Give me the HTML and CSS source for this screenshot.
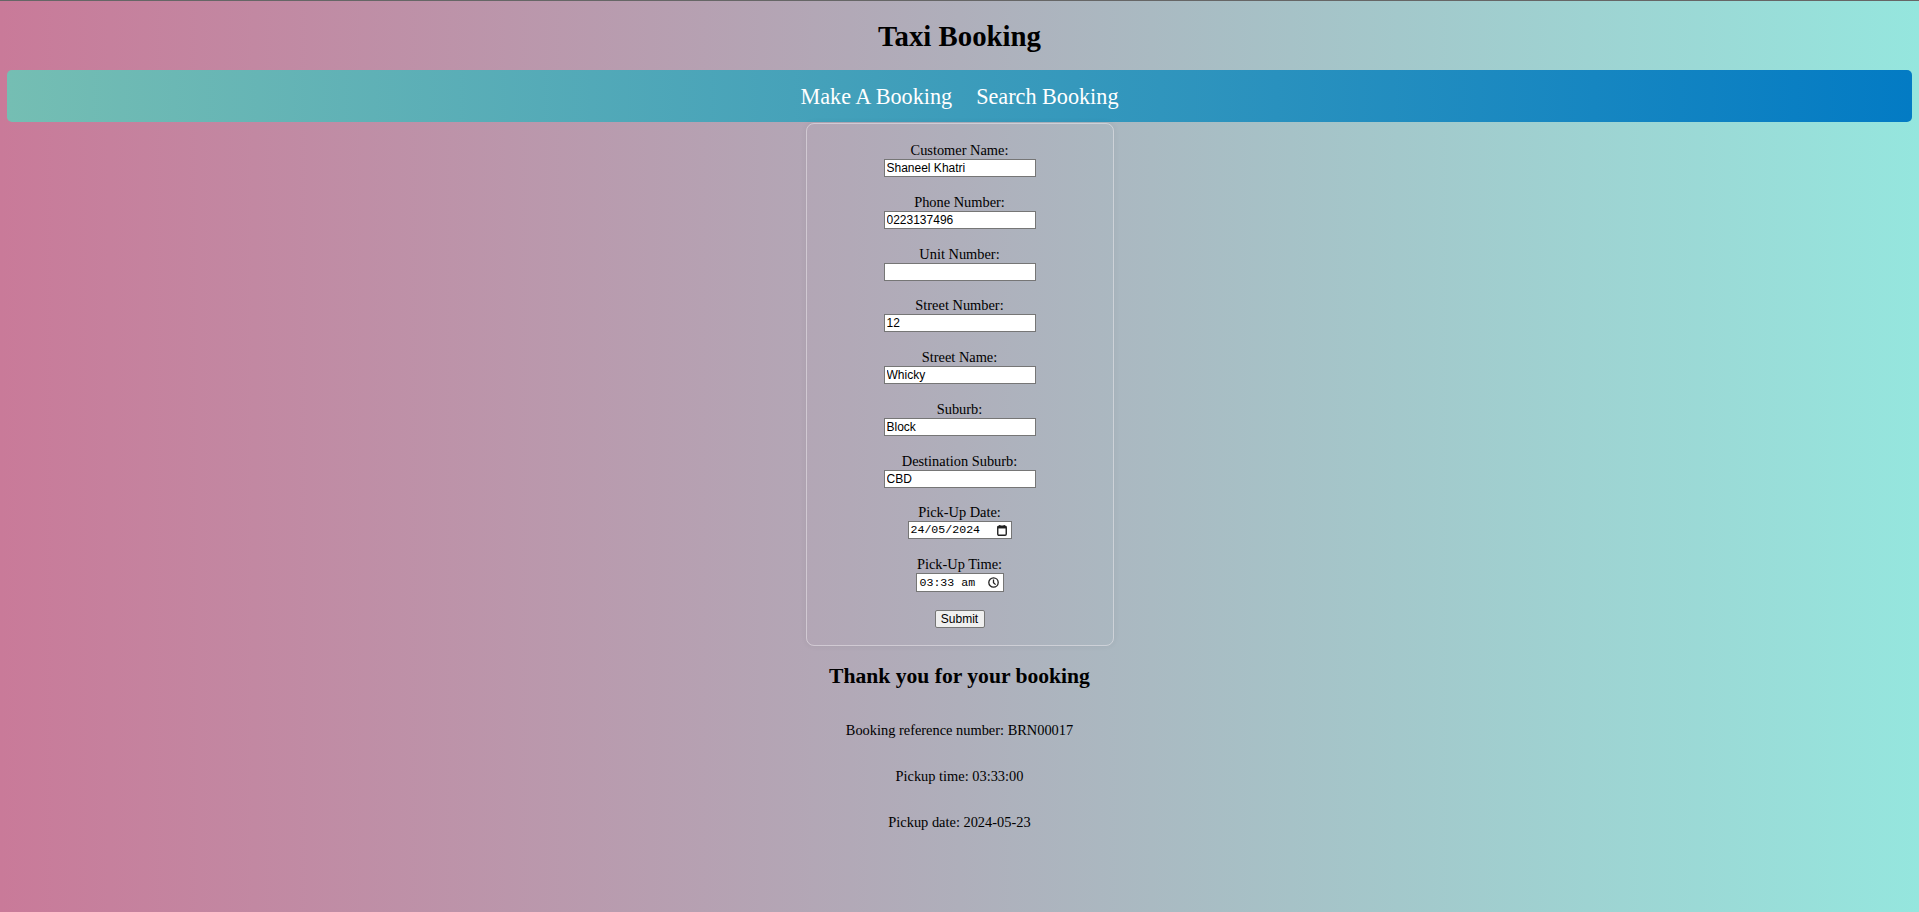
FILE: index.html
```html
<!DOCTYPE html>
<html lang="en">
<head>
<meta charset="utf-8">
<title>Taxi Booking</title>
<link rel="stylesheet" href="styles.css">
</head>
<body>
<div class="page">
  <h1 class="title">Taxi Booking</h1>
  <nav class="nav">
    <a class="nav-link" href="#">Make A Booking</a>
    <a class="nav-link" href="#">Search Booking</a>
  </nav>

  <form class="card">
    <div class="field">
      <label class="field-label">Customer Name:</label>
      <input class="text-input" type="text" value="Shaneel Khatri">
    </div>
    <div class="field">
      <label class="field-label">Phone Number:</label>
      <input class="text-input" type="text" value="0223137496">
    </div>
    <div class="field">
      <label class="field-label">Unit Number:</label>
      <input class="text-input" type="text" value="">
    </div>
    <div class="field">
      <label class="field-label">Street Number:</label>
      <input class="text-input" type="text" value="12">
    </div>
    <div class="field">
      <label class="field-label">Street Name:</label>
      <input class="text-input" type="text" value="Whicky">
    </div>
    <div class="field">
      <label class="field-label">Suburb:</label>
      <input class="text-input" type="text" value="Block">
    </div>
    <div class="field">
      <label class="field-label">Destination Suburb:</label>
      <input class="text-input" type="text" value="CBD">
    </div>
    <div class="field">
      <label class="field-label">Pick-Up Date:</label>
      <div class="picker picker-date">
        <span class="picker-text">24/05/2024</span>
        <svg class="picker-icon" width="10" height="11" viewBox="0 0 10 11">
          <rect x="0.75" y="1.25" width="8.5" height="9" rx="1.2" fill="none" stroke="#222" stroke-width="1.4"/>
          <rect x="0.75" y="1.25" width="8.5" height="2.2" fill="#222"/>
          <rect x="2.2" y="0" width="1.2" height="2" fill="#222"/>
          <rect x="6.6" y="0" width="1.2" height="2" fill="#222"/>
        </svg>
      </div>
    </div>
    <div class="field field-last">
      <label class="field-label">Pick-Up Time:</label>
      <div class="picker picker-time">
        <span class="picker-text">03:33&nbsp;am</span>
        <svg class="picker-icon" width="11" height="11" viewBox="0 0 11 11">
          <circle cx="5.5" cy="5.5" r="4.7" fill="none" stroke="#222" stroke-width="1.3"/>
          <path d="M5.5 2.6 V5.6 L7.6 7.6" fill="none" stroke="#222" stroke-width="1.3"/>
        </svg>
      </div>
    </div>
    <button class="submit" type="button">Submit</button>
  </form>

  <section class="result">
    <h2 class="result-title">Thank you for your booking</h2>
    <div class="result-list">
      <p class="result-line">Booking reference number: BRN00017</p>
      <p class="result-line">Pickup time: 03:33:00</p>
      <p class="result-line">Pickup date: 2024-05-23</p>
    </div>
  </section>
</div>
</body>
</html>
```

FILE: styles.css
```css
html {
  min-height: 100%;
  background: linear-gradient(to right, #c97a99 0%, #afafbb 50%, #95e6de 100%);
}

body {
  margin: 0;
  min-height: 911px;
  border-top: 1px solid #666666;
  font-family: "Liberation Serif", "Times New Roman", serif;
  color: #000;
}

.page {
  padding: 0 7px;
}

.title {
  margin: 19px 0 17px;
  font-size: 28.8px;
  line-height: 33px;
  font-weight: bold;
  text-align: center;
}

.nav {
  height: 52px;
  display: flex;
  justify-content: center;
  align-items: center;
  gap: 24px;
  border-radius: 5px;
  background: linear-gradient(to right, #75beb3 0%, #3c9cbb 50%, #037bc4 100%);
}

.nav-link {
  color: #ffffff;
  text-decoration: none;
  font-size: 22.2px;
  line-height: 26px;
  padding-top: 1px;
}

.card {
  box-sizing: border-box;
  width: 308px;
  margin: 1px auto 0;
  padding: 18px 0 17px;
  border: 1px solid rgba(240, 236, 240, 0.5);
  border-radius: 8px;
  box-shadow: 0 0 6px rgba(0, 0, 0, 0.06);
  display: flex;
  flex-direction: column;
  align-items: center;
}

.field {
  display: flex;
  flex-direction: column;
  align-items: center;
  margin-bottom: 16.75px;
}

.field-last {
  margin-bottom: 18px;
}

.field-label {
  font-size: 14.4px;
  line-height: 17px;
}

.text-input {
  box-sizing: border-box;
  width: 152px;
  height: 18px;
  margin: 0;
  padding: 1px 2px;
  border: 1px solid #767676;
  border-radius: 0;
  background: #ffffff;
  color: #000;
  font-family: "Liberation Sans", Arial, sans-serif;
  font-size: 12px;
  line-height: 14px;
  outline: none;
}

.picker {
  box-sizing: border-box;
  display: flex;
  align-items: center;
  justify-content: space-between;
  border: 1px solid #767676;
  background: #ffffff;
  font-family: "Liberation Mono", "Courier New", monospace;
  font-size: 11.6px;
  color: #000;
}

.picker-date {
  width: 104px;
  height: 18px;
  padding: 0 4px 0 2px;
}

.picker-time {
  width: 88px;
  height: 19px;
  padding: 0 4px 0 3px;
}

.picker-text {
  line-height: 14px;
}

.picker-icon {
  display: block;
  flex: none;
}

.submit {
  box-sizing: border-box;
  width: 50px;
  height: 18px;
  margin: 0;
  padding: 0;
  border: 1px solid #767676;
  border-radius: 2px;
  background: #efefef;
  color: #000;
  font-family: "Liberation Sans", Arial, sans-serif;
  font-size: 12px;
  line-height: 14px;
}

.result {
  text-align: center;
}

.result-title {
  margin: 18px 0 0;
  font-size: 21.6px;
  line-height: 25px;
  font-weight: bold;
}

.result-list {
  display: flex;
  flex-direction: column;
  gap: 29px;
  padding-top: 32.5px;
}

.result-line {
  margin: 0;
  font-size: 14.4px;
  line-height: 17px;
}
```
